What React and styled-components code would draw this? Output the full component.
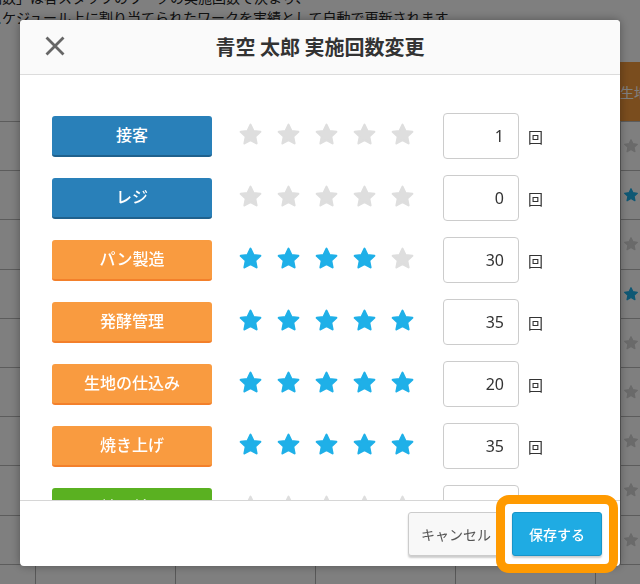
import React from 'react';
import styled, { createGlobalStyle } from 'styled-components';

const GlobalStyle = createGlobalStyle`
  html, body {
    margin: 0;
    padding: 0;
    width: 640px;
    height: 584px;
    overflow: hidden;
  }
  body {
    font-family: "Noto Sans CJK JP", "Noto Sans", sans-serif;
    background: #fff;
  }
`;

const palette = {
  blue: { bg: '#2980b9', edge: '#1f618d' },
  orange: { bg: '#f99b40', edge: '#f3802b' },
  green: { bg: '#5ab121', edge: '#468c17' },
};

const works = [
  { name: '接客', tone: 'blue', level: 0, count: 1 },
  { name: 'レジ', tone: 'blue', level: 0, count: 0 },
  { name: 'パン製造', tone: 'orange', level: 4, count: 30 },
  { name: '発酵管理', tone: 'orange', level: 5, count: 35 },
  { name: '生地の仕込み', tone: 'orange', level: 5, count: 20 },
  { name: '焼き上げ', tone: 'orange', level: 5, count: 35 },
  { name: '並べ付け', tone: 'green', level: 0, count: 0 },
  { name: '品出し', tone: 'green', level: 1, count: 4 },
  { name: '清掃', tone: 'green', level: 2, count: 12 },
  { name: '包装', tone: 'green', level: 0, count: 0 },
  { name: '発注', tone: 'blue', level: 3, count: 8 },
  { name: '検品', tone: 'blue', level: 1, count: 2 },
];
const moreWorks = Array.from({ length: 24 }, (_, i) => ({
  name: `作業 ${i + 1}`,
  tone: ['blue', 'orange', 'green'][i % 3],
  level: i % 6,
  count: i * 3,
}));
const allWorks = [...works, ...moreWorks];

const sideStars = [false, true, false, true, false, false, false, false, false];

// ---------- background page ----------

const Page = styled.div`
  width: 640px;
  height: 584px;
  overflow: hidden;
  background: #fff;
`;

const Notice = styled.div`
  margin: -13px 0 0 -12px;
  font-size: 14px;
  line-height: 20px;
  color: #222;
  white-space: nowrap;
`;

const Table = styled.div`
  margin-top: 35px;
`;

const TableRow = styled.div`
  display: grid;
  grid-template-columns: 620px 1fr;
  height: ${p => (p.$head ? '60px' : '49.2px')};
  box-sizing: border-box;
  border-bottom: 1px solid #b8b8b8;
`;

const Cell = styled.div`
  display: flex;
  align-items: center;
  box-sizing: border-box;
  border-left: ${p => (p.$edge ? '1px solid #b8b8b8' : 'none')};
  background: ${p => (p.$head ? '#f59a3c' : 'transparent')};
  color: #fff;
  font-size: 14px;
  white-space: nowrap;
  overflow: hidden;
  padding-left: ${p => (p.$star ? '2px' : '0')};
`;

const FootRow = styled.div`
  display: grid;
  grid-template-columns: 35px repeat(5, 140px);
  height: 30px;
`;

const FootCell = styled.div`
  border-left: 1px solid #b0b0b0;
  &:first-child {
    border-left: none;
  }
`;

const Overlay = styled.div`
  position: fixed;
  inset: 0;
  background: rgba(0, 0, 0, 0.5);
`;

// ---------- modal ----------

const Modal = styled.div`
  position: fixed;
  top: 20px;
  left: 20px;
  width: 600px;
  height: 546px;
  background: #fff;
  border-radius: 4px;
  box-shadow: 0 0 10px rgba(0, 0, 0, 0.35);
  display: flex;
  flex-direction: column;
`;

const Header = styled.header`
  height: 55px;
  flex-shrink: 0;
  box-sizing: border-box;
  display: grid;
  grid-template-columns: 1fr auto 1fr;
  align-items: center;
  padding: 0 25px 2px;
  background: #fafafa;
  border-bottom: 1px solid #dcdcdc;
  border-radius: 4px 4px 0 0;
`;

const CloseButton = styled.button`
  justify-self: start;
  width: 20px;
  height: 20px;
  padding: 0;
  border: none;
  background: none;
  display: flex;
`;

const Title = styled.h2`
  margin: 0;
  font-size: 20px;
  font-weight: 700;
  color: #333;
  white-space: nowrap;
`;

const Body = styled.div`
  flex: 1;
  overflow-y: scroll;
  padding: 38px 0 38px 32px;

  &::-webkit-scrollbar {
    width: 5px;
  }
  &::-webkit-scrollbar-track {
    background: #f1f1f1;
  }
  &::-webkit-scrollbar-thumb {
    background: #c6c6c6;
  }
`;

const Row = styled.div`
  display: flex;
  align-items: center;
  height: 46px;
  margin-bottom: 16px;
`;

const Label = styled.div`
  width: 160px;
  height: 41px;
  flex-shrink: 0;
  box-sizing: border-box;
  border-radius: 3px;
  background: ${p => palette[p.$tone].bg};
  border-bottom: 2px solid ${p => palette[p.$tone].edge};
  color: #fff;
  font-size: 16px;
  font-weight: 500;
  display: flex;
  align-items: center;
  justify-content: center;
  padding-bottom: 2px;
`;

const Stars = styled.div`
  display: flex;
  gap: 13px;
  margin-left: 26px;
  margin-top: -3px;
`;

const CountInput = styled.input`
  width: 76px;
  height: 46px;
  box-sizing: border-box;
  margin-left: 28px;
  border: 1px solid #cccccc;
  border-radius: 4px;
  padding: 0 14px 0 6px;
  text-align: right;
  font-family: "Noto Sans", sans-serif;
  font-size: 16px;
  color: #333;
  background: #fff;
  outline: none;
`;

const Unit = styled.span`
  margin-left: 9px;
  font-size: 15px;
  color: #333;
`;

const Footer = styled.footer`
  height: 66px;
  flex-shrink: 0;
  box-sizing: border-box;
  border-top: 1px solid #d6d6d6;
  display: flex;
  justify-content: flex-end;
  align-items: flex-start;
  gap: 8px;
  padding: 11px 18px 0 0;
`;

const Button = styled.button`
  height: 44px;
  box-sizing: border-box;
  border-radius: 3px;
  font-family: "Noto Sans CJK JP", sans-serif;
  font-size: 14px;
  font-weight: ${p => (p.$primary ? 500 : 400)};
  padding: ${p => (p.$primary ? '0 16px' : '0 12px')};
  color: ${p => (p.$primary ? '#fff' : '#555')};
  background: ${p => (p.$primary ? '#1fabe3' : '#f8f8f8')};
  border: 1px solid ${p => (p.$primary ? '#1894c8' : '#cccccc')};
  box-shadow: 0 2px 2px rgba(0, 0, 0, 0.2);
`;

const Highlight = styled.div`
  position: absolute;
  left: 476px;
  top: 475px;
  width: 122px;
  height: 78px;
  box-sizing: border-box;
  border: 9px solid #ff9a00;
  border-radius: 13px;
  pointer-events: none;
`;

const Star = ({ on, size = 25, color }) => {
  const fill = color || (on ? '#1fb0e8' : '#dedede');
  return (
    <svg width={size} height={size} viewBox="0 0 24 24">
      <path
        d="M12 2.6l2.85 6.05 6.6.8-4.87 4.55 1.25 6.55L12 17.3l-5.83 3.25 1.25-6.55L2.55 9.45l6.6-.8z"
        fill={fill}
        stroke={fill}
        strokeWidth="2"
        strokeLinejoin="round"
      />
    </svg>
  );
};

const CloseIcon = () => (
  <svg width="20" height="20" viewBox="0 0 20 20">
    <path d="M2.5 2.5L17.5 17.5M17.5 2.5L2.5 17.5" stroke="#666" strokeWidth="2.8" strokeLinecap="square" />
  </svg>
);

const WorkRow = ({ work }) => (
  <Row>
    <Label $tone={work.tone}>{work.name}</Label>
    <Stars>
      {[0, 1, 2, 3, 4].map(i => (
        <Star key={i} on={i < work.level} />
      ))}
    </Stars>
    <CountInput type="text" defaultValue={work.count} readOnly />
    <Unit>回</Unit>
  </Row>
);

const App = () => {
  return (
    <>
      <GlobalStyle />
      <Page>
        <Notice>
          <div>回数」は各スタッフのワークの実施回数で決まり、</div>
          <div>スケジュール上に割り当てられたワークを実績として自動で更新されます。</div>
        </Notice>
        <Table>
          <TableRow $head>
            <Cell />
            <Cell $head>生地の仕込み</Cell>
          </TableRow>
          {sideStars.map((blue, i) => (
            <TableRow key={i}>
              <Cell />
              <Cell $edge $star>
                <Star size={16} color={blue ? '#1fb0e8' : '#d4d4d4'} />
              </Cell>
            </TableRow>
          ))}
          <FootRow>
            {[0, 1, 2, 3, 4, 5].map(i => (
              <FootCell key={i} />
            ))}
          </FootRow>
        </Table>
      </Page>
      <Overlay />
      <Modal>
        <Header>
          <CloseButton aria-label="閉じる">
            <CloseIcon />
          </CloseButton>
          <Title>青空 太郎 実施回数変更</Title>
          <span />
        </Header>
        <Body>
          {allWorks.map((w, i) => (
            <WorkRow key={i} work={w} />
          ))}
        </Body>
        <Footer>
          <Button>キャンセル</Button>
          <Button $primary>保存する</Button>
        </Footer>
        <Highlight />
      </Modal>
    </>
  );
};

export default App;
